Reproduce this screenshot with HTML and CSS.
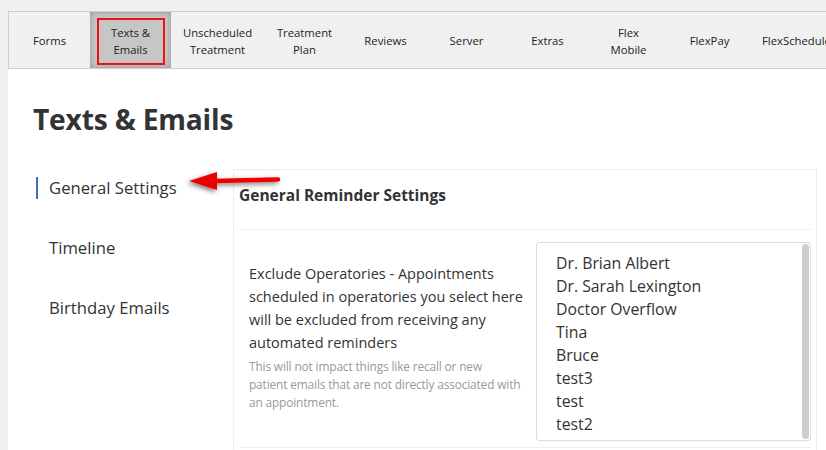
FILE: index.html
```html
<!DOCTYPE html>
<html>
<head>
<meta charset="utf-8">
<link rel="stylesheet" href="styles.css">
</head>
<body>
<div class="page">
  <nav class="tabs">
    <div class="tab w81">Forms</div>
    <div class="tab w81 active">Texts &amp;<br>Emails</div>
    <div class="tab w93">Unscheduled<br>Treatment</div>
    <div class="tab w81">Treatment<br>Plan</div>
    <div class="tab w81">Reviews</div>
    <div class="tab w81">Server</div>
    <div class="tab w81">Extras</div>
    <div class="tab w81">Flex<br>Mobile</div>
    <div class="tab w81">FlexPay</div>
    <div class="tab wlast">FlexScheduler</div>
  </nav>
  <div class="content">
    <h1 class="title">Texts &amp; Emails</h1>
    <div class="layout">
      <aside class="side">
        <div class="side-item current">General Settings</div>
        <div class="side-item">Timeline</div>
        <div class="side-item">Birthday Emails</div>
        <svg class="arrow" width="120" height="40" viewBox="0 0 120 40">
          <defs>
            <filter id="sh" x="-20%" y="-50%" width="140%" height="200%">
              <feGaussianBlur in="SourceAlpha" stdDeviation="2.5"/>
              <feOffset dx="-2" dy="2" result="b"/>
              <feComponentTransfer><feFuncA type="linear" slope="0.55"/></feComponentTransfer>
              <feMerge><feMergeNode/><feMergeNode in="SourceGraphic"/></feMerge>
            </filter>
          </defs>
          <g filter="url(#sh)">
            <polygon points="10,19 38,10 38,28" fill="#ee0000"/>
            <line x1="36" y1="19" x2="99" y2="17.5" stroke="#ee0000" stroke-width="4.5" stroke-linecap="round"/>
          </g>
        </svg>
      </aside>
      <section class="panel">
        <h2 class="panel-title">General Reminder Settings</h2>
        <div class="row">
          <div class="desc">
            <p class="desc-main">Exclude Operatories - Appointments scheduled in operatories you select here will be excluded from receiving any automated reminders</p>
            <p class="desc-note">This will not impact things like recall or new<br>patient emails that are not directly associated with<br>an appointment.</p>
          </div>
          <div class="listbox">
            <ul class="options">
              <li>Dr. Brian Albert</li>
              <li>Dr. Sarah Lexington</li>
              <li>Doctor Overflow</li>
              <li>Tina</li>
              <li>Bruce</li>
              <li>test3</li>
              <li>test</li>
              <li>test2</li>
            </ul>
            <div class="scrollbar"><div class="thumb"></div></div>
          </div>
        </div>
      </section>
    </div>
  </div>
</div>
</body>
</html>
```
FILE: styles.css
```css
html, body {
  margin: 0;
  padding: 0;
  background: #f0f0f0;
  overflow: hidden;
  height: 450px;
}
body {
  font-family: "Open Sans", "Noto Sans", sans-serif;
  color: #333;
}
.page {
  margin: 11px 0 0 8px;
  background: #fff;
  height: 439px;
  width: 900px;
}
.tabs {
  display: flex;
  height: 56px;
  border: 1px solid #cfcfcf;
  border-right: none;
  background: #f0f0f0;
}
.tab {
  box-sizing: border-box;
  display: flex;
  align-items: center;
  justify-content: center;
  text-align: center;
  font-size: 11.3px;
  line-height: 17.5px;
  padding-top: 2px;
  color: #222;
  white-space: nowrap;
  position: relative;
  flex-shrink: 0;
}
.w81 { width: 81px; }
.w93 { width: 93px; }
.wlast { width: 110px; justify-content: flex-start; padding-left: 12px; }
.tab.active {
  background: #c6c6c6;
  box-shadow: inset 0 0 6px rgba(0,0,0,0.25);
}
.tab.active::after {
  content: "";
  position: absolute;
  left: 7px;
  right: 6px;
  top: 6px;
  bottom: 3px;
  border: 2px solid #ee1111;
}
.content {
  padding: 0 0 0 25px;
}
.title {
  margin: 30px 0 0 0;
  font-size: 28.2px;
  line-height: 40px;
  font-weight: 700;
  color: #333;
  letter-spacing: -0.2px;
}
.layout {
  display: flex;
  margin-top: 30px;
}
.side {
  width: 200px;
  position: relative;
  padding-top: 8px;
}
.side-item {
  font-size: 16.7px;
  line-height: 22px;
  padding: 0 0 0 11px;
  margin: 0 0 38px 3px;
  color: #333;
  border-left: 2px solid transparent;
}
.side-item.current {
  border-left-color: #3f6fb5;
}
.arrow {
  position: absolute;
  left: 146px;
  top: -7px;
}
.panel {
  border: 1px solid #eeeeee;
  border-bottom: none;
  width: 584px;
  box-sizing: border-box;
  padding: 0 5px;
  height: 300px;
}
.panel-title {
  margin: 0;
  font-size: 15.5px;
  font-weight: 700;
  color: #333;
  line-height: 22px;
  padding: 14px 0 23px 0;
  border-bottom: 1px solid #eee;
}
.row {
  display: flex;
  justify-content: space-between;
  border-bottom: 1px solid #eee;
  padding: 12px 0 6px 10px;
}
.desc {
  width: 280px;
  padding-top: 20px;
}
.desc-main {
  margin: 0;
  font-size: 14.5px;
  line-height: 23px;
  color: #333;
}
.desc-note {
  margin: 3px 0 0 0;
  font-size: 11.9px;
  line-height: 18px;
  letter-spacing: -0.15px;
  white-space: nowrap;
  color: #999;
}
.listbox {
  position: relative;
  width: 275px;
  height: 199px;
  box-sizing: border-box;
  border: 1px solid #dcdcdc;
  border-radius: 3px;
  overflow: hidden;
}
.options {
  list-style: none;
  margin: 0;
  padding: 9px 0 0 19px;
}
.options li {
  font-size: 15.8px;
  line-height: 23px;
  color: #333;
}
.scrollbar {
  position: absolute;
  top: 0;
  right: 0;
  width: 9px;
  height: 100%;
}
.thumb {
  margin: 1px;
  height: calc(100% - 2px);
  background: #cdcdcd;
  border-radius: 4px;
}
```
